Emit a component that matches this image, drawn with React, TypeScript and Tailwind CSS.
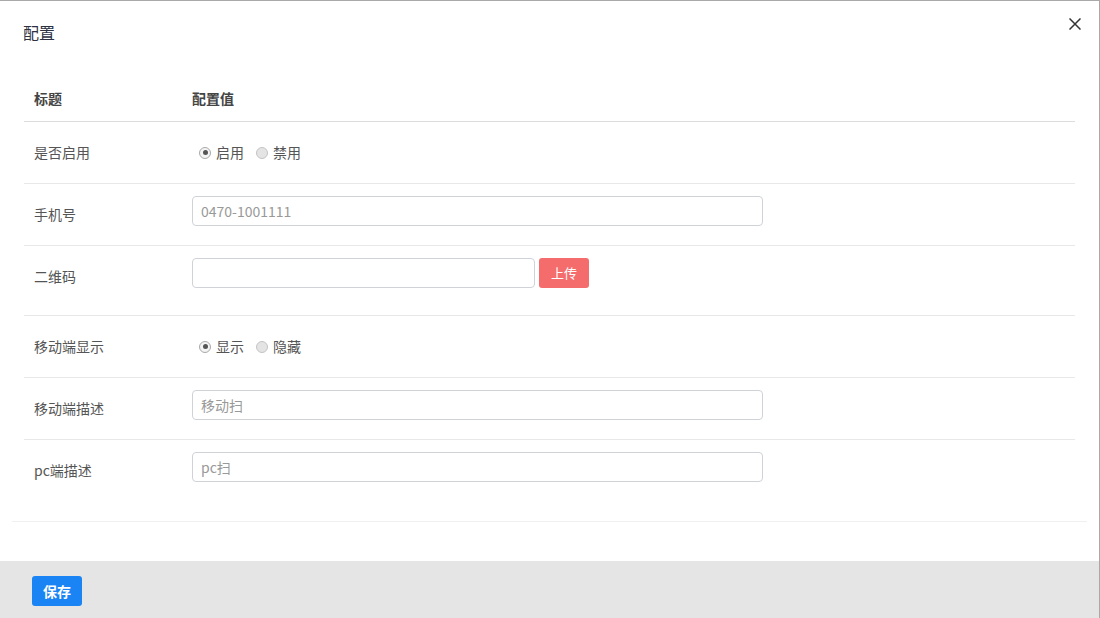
import { useState } from 'react';

type RowProps = { label: string; children: React.ReactNode; tall?: boolean; last?: boolean };

const Row = ({ label, children, tall, last }: RowProps) => (
  <div
    className={`flex items-center ${tall ? 'h-[70px] pb-2' : last ? 'h-[61px]' : 'h-[62px]'} ${
      last ? '' : 'border-b border-[#e8e8e8]'
    }`}
  >
    <div className="w-[168px] pl-[10px] text-[14px] text-[#555]">{label}</div>
    <div className="flex-1 flex items-center">{children}</div>
  </div>
);

const Radio = ({ checked, label, onClick }: { checked: boolean; label: string; onClick: () => void }) => (
  <label onClick={onClick} className="flex items-center cursor-pointer">
    <span
      className={`w-[12px] h-[12px] rounded-full border flex items-center justify-center ${
        checked ? 'border-[#a9a9a9] bg-[#f4f4f4]' : 'border-[#c4c4c4] bg-[#e4e4e4]'
      }`}
    >
      {checked && <span className="w-[5px] h-[5px] rounded-full bg-[#555]" />}
    </span>
    <span className="ml-[5px] text-[14px] text-[#555]">{label}</span>
  </label>
);

const TextInput = ({ placeholder, width }: { placeholder: string; width: string }) => (
  <input
    placeholder={placeholder}
    className={`${width} h-[30px] mb-[8px] px-[8px] border border-[#cfd3d8] rounded-[4px] text-[14px] text-[#333] placeholder:text-[#999] outline-none`}
  />
);

export default function App() {
  const [enabled, setEnabled] = useState(true);
  const [mobileShow, setMobileShow] = useState(true);

  return (
    <div
      className="w-[1100px] h-[618px] flex flex-col bg-white border-t border-r border-[#a9a9a9] overflow-hidden"
      style={{ fontFamily: '"Microsoft YaHei", "Noto Sans CJK SC", Arial, sans-serif' }}
    >
      {/* Header */}
      <div className="relative h-[65px] flex items-center pl-[23px] pb-[4px]">
        <span className="text-[16px] text-[#2d3142]">配置</span>
        <button className="absolute right-[18px] top-[17px] w-[12px] h-[12px] text-[#333]">
          <svg viewBox="0 0 12 12" width="12" height="12" fill="none" stroke="currentColor" strokeWidth="1.5">
            <path d="M0.5 0.5 L11.5 11.5 M11.5 0.5 L0.5 11.5" />
          </svg>
        </button>
      </div>

      {/* Table */}
      <div className="mx-[12px] px-[12px] pt-[9px] pb-[20px] border-b border-[#f0f0f0]">
        <div className="flex items-center h-[47px] border-b border-[#dcdcdc]">
          <div className="w-[168px] pl-[10px] text-[14px] font-bold text-[#444]">标题</div>
          <div className="flex-1 text-[14px] font-bold text-[#444]">配置值</div>
        </div>

        <Row label="是否启用">
          <div className="flex items-center ml-[7px] gap-[12px]">
            <Radio checked={enabled} label="启用" onClick={() => setEnabled(true)} />
            <Radio checked={!enabled} label="禁用" onClick={() => setEnabled(false)} />
          </div>
        </Row>

        <Row label="手机号">
          <TextInput placeholder="0470-1001111" width="w-[571px]" />
        </Row>

        <Row label="二维码" tall>
          <div className="flex items-start mb-[8px]">
            <input className="w-[343px] h-[30px] px-[8px] border border-[#cfd3d8] rounded-[4px] text-[14px] outline-none" />
            <button className="ml-[4px] w-[50px] h-[30px] rounded-[3px] bg-[#f56c6c] text-white text-[13px]">上传</button>
          </div>
        </Row>

        <Row label="移动端显示">
          <div className="flex items-center ml-[7px] gap-[12px]">
            <Radio checked={mobileShow} label="显示" onClick={() => setMobileShow(true)} />
            <Radio checked={!mobileShow} label="隐藏" onClick={() => setMobileShow(false)} />
          </div>
        </Row>

        <Row label="移动端描述">
          <TextInput placeholder="移动扫" width="w-[571px]" />
        </Row>

        <Row label="pc端描述" last>
          <TextInput placeholder="pc扫" width="w-[571px]" />
        </Row>
      </div>

      {/* Footer */}
      <div className="mt-auto h-[57px] bg-[#e5e5e5] pl-[32px] pt-[15px]">
        <button className="w-[50px] h-[30px] rounded-[3px] bg-[#1a84f4] text-white text-[14px] font-bold">保存</button>
      </div>
    </div>
  );
}
